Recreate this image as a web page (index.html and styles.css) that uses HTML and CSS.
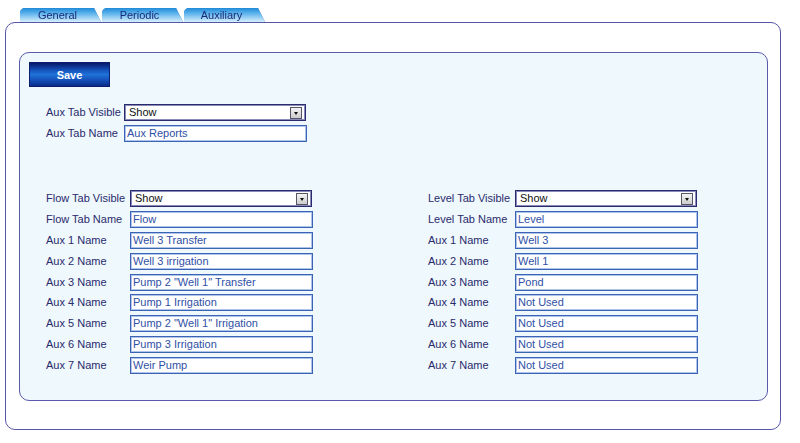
FILE: index.html
```html
<!DOCTYPE html>
<html>
<head>
<meta charset="utf-8">
<link rel="stylesheet" href="styles.css">
</head>
<body>
<div class="page">
  <div class="tabs">
    <div class="tab">General</div>
    <div class="tab">Periodic</div>
    <div class="tab">Auxiliary</div>
  </div>
  <div class="outer">
    <div class="inner">
      <div class="save">Save</div>
      <div class="form aux">
        <div class="label">Aux Tab Visible</div>
        <div class="select"><span>Show</span><span class="arrow"></span></div>
        <div class="label">Aux Tab Name</div>
        <div class="input">Aux Reports</div>
      </div>
      <div class="cols">
        <div class="form flow">
          <div class="label">Flow Tab Visible</div>
          <div class="select"><span>Show</span><span class="arrow"></span></div>
          <div class="label">Flow Tab Name</div><div class="input">Flow</div>
          <div class="label">Aux 1 Name</div><div class="input">Well 3 Transfer</div>
          <div class="label">Aux 2 Name</div><div class="input">Well 3 irrigation</div>
          <div class="label">Aux 3 Name</div><div class="input">Pump 2 "Well 1" Transfer</div>
          <div class="label">Aux 4 Name</div><div class="input">Pump 1 Irrigation</div>
          <div class="label">Aux 5 Name</div><div class="input">Pump 2 "Well 1" Irrigation</div>
          <div class="label">Aux 6 Name</div><div class="input">Pump 3 Irrigation</div>
          <div class="label">Aux 7 Name</div><div class="input">Weir Pump</div>
        </div>
        <div class="form level">
          <div class="label">Level Tab Visible</div>
          <div class="select"><span>Show</span><span class="arrow"></span></div>
          <div class="label">Level Tab Name</div><div class="input">Level</div>
          <div class="label">Aux 1 Name</div><div class="input">Well 3</div>
          <div class="label">Aux 2 Name</div><div class="input">Well 1</div>
          <div class="label">Aux 3 Name</div><div class="input">Pond</div>
          <div class="label">Aux 4 Name</div><div class="input">Not Used</div>
          <div class="label">Aux 5 Name</div><div class="input">Not Used</div>
          <div class="label">Aux 6 Name</div><div class="input">Not Used</div>
          <div class="label">Aux 7 Name</div><div class="input">Not Used</div>
        </div>
      </div>
    </div>
  </div>
</div>
</body>
</html>
```
FILE: styles.css
```css
* { box-sizing: border-box; }
html, body { margin: 0; padding: 0; background: #ffffff; }
body {
  font-family: "Liberation Sans", Arial, sans-serif;
  font-size: 11px;
  width: 800px;
  height: 443px;
  overflow: hidden;
}
.page { padding-top: 8px; }

.tabs {
  display: flex;
  gap: 1px;
  margin-left: 20px;
  height: 14px;
  filter: drop-shadow(0 0 0.7px #2a66b8);
}
.tab {
  width: 81px;
  height: 14px;
  line-height: 14px;
  padding-right: 6px;
  text-align: center;
  color: #1a2a78;
  background: linear-gradient(#1f8ad8 0%, #5fb4ec 40%, #d8f0fc 100%);
  border-radius: 5px 4px 0 0;
  clip-path: polygon(0 0, 74px 0, 81px 100%, 0 100%);
}

.outer {
  margin-left: 5px;
  width: 776px;
  height: 408px;
  border: 1px solid #5656a8;
  border-radius: 10px;
  padding: 29px 12px 0 13px;
}
.inner {
  width: 749px;
  height: 349px;
  border: 1px solid #5a5aaa;
  border-radius: 10px;
  background: #eef8fd;
  padding: 9px 0 0 9px;
}

.save {
  width: 81px;
  height: 25px;
  line-height: 25px;
  text-align: center;
  color: #ffffff;
  font-weight: bold;
  background: linear-gradient(#08186a 0%, #1450b8 30%, #1e72d8 50%, #1450b8 75%, #0a2a8a 100%);
  border: 1px solid #0c1e6e;
}

.form {
  display: grid;
  row-gap: 3.9px;
  align-items: center;
}
.aux {
  margin: 17px 0 0 17px;
  grid-template-columns: 78px 183px;
  row-gap: 4px;
}
.cols {
  display: flex;
  margin: 48px 0 0 17px;
  gap: 115px;
}
.flow { grid-template-columns: 84px 183px; }
.level { grid-template-columns: 87px 183px; }

.label {
  color: #2a2a6c;
  white-space: nowrap;
  line-height: 17px;
}
.input {
  height: 17px;
  line-height: 15px;
  padding-left: 2px;
  color: #2f50a6;
  background: #ffffff;
  border: 1px solid #3c64b4;
  box-shadow: inset 0 0 0 1px #aec4ea;
  white-space: nowrap;
  overflow: hidden;
}
.select {
  width: 182px;
  height: 17px;
  display: flex;
  align-items: center;
  justify-content: space-between;
  padding: 0 3px 0 4px;
  color: #111111;
  background: #ffffff;
  border: 1px solid #2a2a6e;
  box-shadow: inset 0 0 0 1px #8a8ab8;
}
.select span:first-child { line-height: 15px; }
.arrow {
  position: relative;
  width: 12px;
  height: 12px;
  background: linear-gradient(#f4f4f4, #cccccc);
  border: 1px solid #555566;
}
.arrow::after {
  content: "";
  position: absolute;
  left: 3px;
  top: 4px;
  border-left: 2.5px solid transparent;
  border-right: 2.5px solid transparent;
  border-top: 3px solid #111111;
}
```
